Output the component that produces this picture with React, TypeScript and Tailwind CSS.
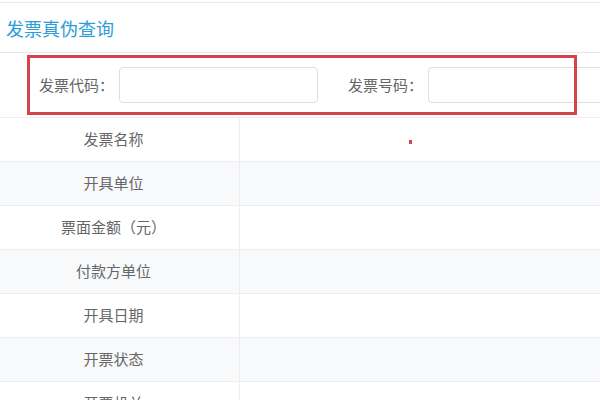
const rows = ["发票名称", "开具单位", "票面金额（元）", "付款方单位", "开具日期", "开票状态", "开票机关"];

export default function App() {
  return (
    <div
      className="relative w-[600px] h-[400px] overflow-hidden bg-white pt-[2px] text-[#666]"
      style={{ fontFamily: '"Noto Sans CJK SC", "Noto Sans", sans-serif' }}
    >
      {/* Header */}
      <div className="h-[51px] border-t border-b border-[#e8e8e8] flex items-center pl-[6px]">
        <h1 className="text-[18px] text-[#2d9cd8] leading-none">发票真伪查询</h1>
      </div>

      {/* Search form */}
      <div className="h-[65px] border-b border-[#eeeeee] flex items-center pl-[39px] whitespace-nowrap">
        <span className="w-[80px] shrink-0 text-[15px]">发票代码：</span>
        <input className="w-[199px] h-[36px] shrink-0 border border-[#dedede] rounded-[4px] bg-white outline-none" />
        <span className="ml-[30px] w-[80px] shrink-0 text-[15px]">发票号码：</span>
        <input className="w-[199px] h-[36px] shrink-0 border border-[#dedede] rounded-[4px] bg-white outline-none" />
      </div>

      {/* Result table */}
      <div>
        {rows.map((label, i) => (
          <div
            key={label}
            className={`flex h-[44px] border-b border-[#eeeeee] ${i % 2 === 1 ? "bg-[#f8f9fb]" : "bg-white"}`}
          >
            <div className="w-[240px] shrink-0 border-r border-[#eeeeee] flex items-center justify-center pr-[12px] text-[15px]">
              {label}
            </div>
            <div className="flex-1 flex items-center">
              {i === 0 && <span className="ml-[169px] mt-[4px] w-[3px] h-[4px] bg-[#d9434a]" />}
            </div>
          </div>
        ))}
      </div>

      {/* Annotation box */}
      <div className="absolute left-[27px] top-[55px] w-[550px] h-[60px] border-[3px] border-[#d7434b] pointer-events-none" />
    </div>
  );
}
